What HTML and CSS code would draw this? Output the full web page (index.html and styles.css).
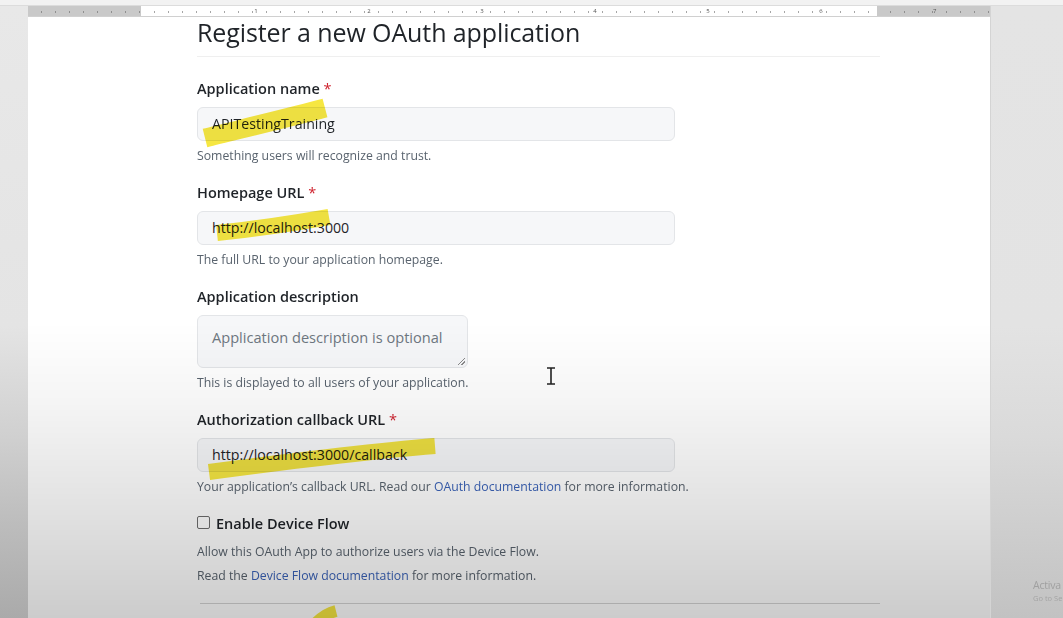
FILE: index.html
```html
<!DOCTYPE html>
<html lang="en">
<head>
<meta charset="utf-8">
<title>Register a new OAuth application</title>
<link rel="stylesheet" href="styles.css">
</head>
<body>
<div class="topbar"></div>
<div class="workspace">
  <div class="gutter gutter-left"></div>
  <div class="page-col">
    <div class="ruler">
      <div class="ruler-margin"></div>
      <div class="ruler-body">
        <span>1</span><span>2</span><span>3</span><span>4</span><span>5</span><span>6</span>
      </div>
      <div class="ruler-margin ruler-margin-right"><span>7</span></div>
    </div>
    <div class="page">
      <h1 class="title">Register a new OAuth application</h1>
      <div class="rule"></div>

      <div class="group">
        <label class="label">Application name <span class="req">*</span></label>
        <div class="field">
          <div class="input">APITestingTraining</div>
          <svg class="hl hl-1" width="140" height="50" viewBox="0 0 140 50"><path d="M8 40 C40 32 90 20 128 10" /></svg>
        </div>
        <p class="help">Something users will recognize and trust.</p>
      </div>

      <div class="group">
        <label class="label">Homepage URL <span class="req">*</span></label>
        <div class="field">
          <div class="input">http://localhost:3000</div>
          <svg class="hl hl-2" width="140" height="40" viewBox="0 0 140 40"><path d="M12 26 C50 22 90 16 124 10" /></svg>
        </div>
        <p class="help">The full URL to your application homepage.</p>
      </div>

      <div class="group">
        <label class="label">Application description</label>
        <div class="textarea">Application description is optional<span class="grip"></span></div>
        <p class="help">This is displayed to all users of your application.</p>
      </div>

      <div class="group">
        <label class="label">Authorization callback URL <span class="req">*</span></label>
        <div class="field">
          <div class="input">http://localhost:3000/callback</div>
          <svg class="hl hl-3" width="250" height="50" viewBox="0 0 250 50"><path d="M10 38 C70 30 160 18 236 12" /></svg>
        </div>
        <p class="help">Your application’s callback URL. Read our <a class="link">OAuth documentation</a> for more information.</p>
      </div>

      <div class="check-row">
        <span class="checkbox"></span>
        <span class="check-label">Enable Device Flow</span>
      </div>
      <p class="help help-flow">Allow this OAuth App to authorize users via the Device Flow.</p>
      <p class="help help-flow">Read the <a class="link">Device Flow documentation</a> for more information.</p>
      <div class="rule rule-bottom">
        <svg class="hl hl-4" width="30" height="20" viewBox="0 0 30 20"><path d="M4 18 C10 12 16 8 24 6" /></svg>
      </div>
      <div class="shade"></div>
    </div>
  </div>
  <div class="gutter gutter-right"></div>
</div>

<svg class="cursor" width="12" height="18" viewBox="0 0 12 18"><path d="M2 1 H10 M6 1 V17 M2 17 H10" /></svg>
<div class="watermark">
  <div class="wm-1">Activa</div>
  <div class="wm-2">Go to Se</div>
</div>
</body>
</html>
```

FILE: styles.css
```css
* { box-sizing: border-box; }

html, body {
  margin: 0;
  padding: 0;
  width: 1063px;
  height: 618px;
  overflow: hidden;
}

body {
  font-family: "Open Sans", "Noto Sans", sans-serif;
  color: #1f2328;
  background: #e6e6e6;
  position: relative;
}

.topbar {
  height: 6px;
  background: #f2f2f2;
  border-bottom: 1px solid #dcdcdc;
}

.workspace {
  display: flex;
  height: 612px;
}

.gutter {
  flex: none;
}

.gutter-left {
  width: 28px;
  background: linear-gradient(to bottom, #e8e8e8 0, #e4e4e4 320px, #d0d0d0 430px, #bcbcbc 520px, #aaaaaa 612px);
}

.gutter-right {
  width: 73px;
  background: linear-gradient(to bottom, #e4e4e4 0, #e3e3e3 320px, #dadada 430px, #cecece 520px, #c2c2c2 612px);
  border-left: 1px solid #d4d4d4;
}

.page-col {
  width: 962px;
  flex: none;
  display: flex;
  flex-direction: column;
}

.ruler {
  height: 11px;
  display: flex;
  font-size: 6px;
  line-height: 11px;
  color: #555;
  border-bottom: 1px solid #d0d0d0;
}

.ruler-margin {
  width: 113px;
  flex: none;
  background: #c9c9c9 repeating-linear-gradient(to right, transparent 0 13px, #8f8f8f 13px 14px);
  background-size: 100% 2px;
  background-repeat: no-repeat;
  background-position: 0 5px;
  background-color: #c9c9c9;
}

.ruler-margin-right {
  padding-left: 56px;
}

.ruler-body {
  flex: 1;
  background: #fff repeating-linear-gradient(to right, transparent 0 13px, #a6a6a6 13px 14px);
  background-size: 100% 2px;
  background-repeat: no-repeat;
  background-position: 0 5px;
  background-color: #fff;
  display: flex;
  padding-left: 112px;
  gap: 107px;
}

.ruler-body span {
  width: 6px;
  text-align: center;
}

.page {
  flex: 1;
  background: #fff;
  padding-left: 169px;
  position: relative;
}

.title {
  margin: 0;
  font-size: 25px;
  font-weight: 400;
  line-height: 29px;
  padding-top: 1px;
  letter-spacing: -0.1px;
  color: #1f2328;
}

.rule {
  width: 683px;
  height: 1px;
  background: #efefef;
  margin-top: 9px;
  margin-bottom: 22px;
}

.group {
  display: flex;
  flex-direction: column;
  align-items: flex-start;
  margin-bottom: 18px;
}

.label {
  font-size: 14.5px;
  font-weight: 600;
  line-height: 20px;
  color: #1f2328;
  margin-bottom: 8px;
}

.req {
  color: #cf222e;
  font-weight: 400;
}

.field {
  position: relative;
}

.input {
  width: 478px;
  height: 34px;
  border: 1px solid #e3e5e8;
  border-radius: 6px;
  background: #f6f7f9;
  padding: 0 14px;
  font-size: 14.2px;
  line-height: 32px;
  color: #1f2328;
}

.textarea {
  position: relative;
  width: 271px;
  height: 53px;
  border: 1px solid #e3e5e8;
  border-radius: 6px;
  background: #f6f7f9;
  padding: 10px 14px;
  font-size: 14.6px;
  line-height: 22px;
  white-space: nowrap;
  color: #6e7781;
}

.grip {
  position: absolute;
  right: 2px;
  bottom: 2px;
  width: 7px;
  height: 7px;
  background: linear-gradient(135deg, transparent 0 45%, #8a8a8a 45% 55%, transparent 55% 70%, #8a8a8a 70% 80%, transparent 80%);
}

.help {
  margin: 6px 0 0;
  font-size: 12.25px;
  line-height: 18px;
  color: #59636e;
}

.link {
  color: #3b63b8;
  text-decoration: none;
}

.check-row {
  display: flex;
  align-items: center;
  gap: 6px;
  height: 20px;
  margin-top: 2px;
}

.checkbox {
  width: 13px;
  height: 13px;
  border: 1px solid #6e6e6e;
  border-radius: 2px;
  background: #fff;
  margin-top: -3px;
}

.check-label {
  font-size: 14.5px;
  font-weight: 600;
  line-height: 20px;
}

.help-flow {
  margin-top: 9px;
}

.help-flow + .help-flow {
  margin-top: 6px;
}

.rule-bottom {
  position: relative;
  margin-top: 18px;
  margin-left: 3px;
  width: 680px;
  background: #d4d4d4;
}

.hl {
  position: absolute;
  pointer-events: none;
  fill: none;
  stroke: #f5e320;
  stroke-linecap: butt;
  opacity: 0.85;
  mix-blend-mode: multiply;
}

.hl path {
  stroke-width: 19;
}

.hl-1 { left: 0; top: -9px; }
.hl-2 { left: 8px; top: -4px; }
.hl-2 path { stroke-width: 16; }
.hl-3 { left: 2px; top: -4px; }
.hl-3 path { stroke-width: 16; }
.hl-4 { left: 112px; top: 2px; }
.hl-4 path { stroke-width: 12; }

.cursor {
  position: absolute;
  left: 545px;
  top: 367px;
  fill: none;
  stroke: #222;
  stroke-width: 1.6;
}

.shade {
  position: absolute;
  left: 0;
  top: 0;
  width: 100%;
  height: 100%;
  pointer-events: none;
  background: linear-gradient(to bottom, rgba(0,0,0,0) 0, rgba(0,0,0,0) 305px, rgba(0,0,0,0.04) 385px, rgba(0,0,0,0.11) 485px, rgba(0,0,0,0.2) 601px);
}

.watermark {
  position: absolute;
  left: 1033px;
  top: 578px;
  width: 30px;
  white-space: nowrap;
  font-family: "Open Sans", sans-serif;
}

.wm-1 {
  font-size: 10.5px;
  line-height: 15px;
  letter-spacing: -0.2px;
  color: #a0a0a0;
}

.wm-2 {
  font-size: 7.5px;
  line-height: 11px;
  color: #a4a4a4;
}
```
